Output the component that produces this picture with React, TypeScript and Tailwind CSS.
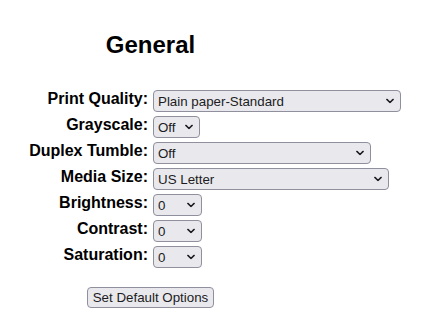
import React from "react";

const Chevron = () => (
  <svg width="8" height="5" viewBox="0 0 8 5" className="absolute right-[6px] top-1/2 -translate-y-1/2 pointer-events-none">
    <path d="M0.9 0.9 L4 4 L7.1 0.9" fill="none" stroke="#1c1b22" strokeWidth="1.5" strokeLinecap="round" strokeLinejoin="round" />
  </svg>
);

function Sel({ w, value }: { w: number; value: string }) {
  return (
    <div className="relative h-[22px] rounded-[4px] border border-[#8f8f9d] bg-[#e9e9ed] text-[13.33px] leading-[21px] text-[#1c1b22] pl-[4px]" style={{ width: w }}>
      <span>{value}</span>
      <Chevron />
    </div>
  );
}

const rows: { label: string; w: number; value: string }[] = [
  { label: "Print Quality:", w: 248, value: "Plain paper-Standard" },
  { label: "Grayscale:", w: 47, value: "Off" },
  { label: "Duplex Tumble:", w: 218, value: "Off" },
  { label: "Media Size:", w: 236, value: "US Letter" },
  { label: "Brightness:", w: 49, value: "0" },
  { label: "Contrast:", w: 49, value: "0" },
  { label: "Saturation:", w: 49, value: "0" },
];

export default function App() {
  return (
    <div className="w-[431px] h-[335px] bg-white text-black" style={{ fontFamily: '"Liberation Sans", Arial, sans-serif' }}>
      <div className="w-[301px] pt-[31px] text-center text-[24px] font-bold leading-[28px]">General</div>
      <div className="mt-[29px] flex flex-col">
        {rows.map((r) => (
          <div key={r.label} className="flex h-[26px] items-center">
            <div className="w-[148px] pb-[5px] text-right text-[16px] font-bold leading-[18px]">{r.label}</div>
            <div className="ml-[5px]">
              <Sel w={r.w} value={r.value} />
            </div>
          </div>
        ))}
      </div>
      <div className="mt-[17px] flex pl-[87px]">
        <div className="h-[21px] w-[127px] rounded-[4px] border border-[#8f8f9d] bg-[#e9e9ed] text-center text-[13.33px] leading-[19px] text-[#1c1b22]">
          Set Default Options
        </div>
      </div>
    </div>
  );
}
